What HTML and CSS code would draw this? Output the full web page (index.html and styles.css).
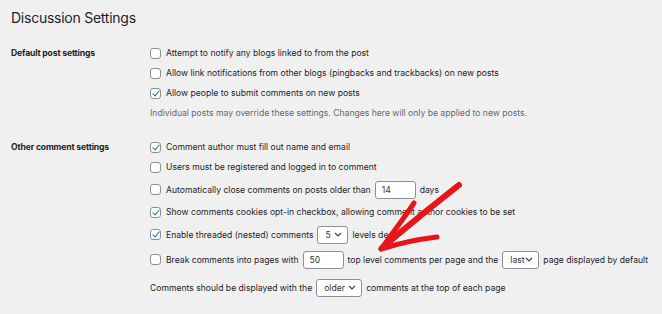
FILE: index.html
```html
<!DOCTYPE html>
<html lang="en">
<head>
  <meta charset="UTF-8" />
  <title>Discussion Settings</title>
  <link rel="stylesheet" href="styles.css">
</head>
<body>
  <div class="wrap">
    <h1 class="title">Discussion Settings</h1>

    <div class="section first">
      <div class="section-label">Default post settings</div>
      <div class="fields">
        <label class="row"><input type="checkbox" class="check"> Attempt to notify any blogs linked to from the post</label>
        <label class="row"><input type="checkbox" class="check"> Allow link notifications from other blogs (pingbacks and trackbacks) on new posts</label>
        <label class="row"><input type="checkbox" class="check" checked> Allow people to submit comments on new posts</label>
        <p class="row description">Individual posts may override these settings. Changes here will only be applied to new posts.</p>
      </div>
    </div>

    <div class="section">
      <div class="section-label">Other comment settings</div>
      <div class="fields">
        <label class="row"><input type="checkbox" class="check" checked> Comment author must fill out name and email</label>
        <label class="row"><input type="checkbox" class="check"> Users must be registered and logged in to comment</label>
        <label class="row field-row"><input type="checkbox" class="check"> Automatically close comments on posts older than <input type="text" class="small-text" value="14"> days</label>
        <label class="row"><input type="checkbox" class="check" checked> Show comments cookies opt-in checkbox, allowing comment author cookies to be set</label>
        <label class="row field-row"><input type="checkbox" class="check" checked> Enable threaded (nested) comments <span class="select select-depth">5 <svg width="8" height="5" viewBox="0 0 8 5"><path d="M1 1L4 4L7 1" stroke="#3c434a" stroke-width="1.2" fill="none"/></svg></span> levels deep</label>
        <label class="row field-row"><input type="checkbox" class="check"> Break comments into pages with <input type="text" class="small-text" value="50"> top level comments per page and the <span class="select select-page">last <svg width="8" height="5" viewBox="0 0 8 5"><path d="M1 1L4 4L7 1" stroke="#3c434a" stroke-width="1.2" fill="none"/></svg></span> page displayed by default</label>
        <div class="row field-row order-row">Comments should be displayed with the <span class="select select-order">older <svg width="8" height="5" viewBox="0 0 8 5"><path d="M1 1L4 4L7 1" stroke="#3c434a" stroke-width="1.2" fill="none"/></svg></span> comments at the top of each page</div>
      </div>
    </div>
  </div>

  <!-- red hand-drawn arrow over the page -->
  <svg class="annotation" width="662" height="314" viewBox="0 0 662 314">
    <g stroke="#e8141c" fill="none" stroke-linecap="round" stroke-linejoin="round">
      <path d="M459 185C440 200 412 222 382 248" stroke-width="6"/>
      <path d="M414 203C404 218 392 234 381 249" stroke-width="5"/>
      <path d="M437 237C420 239 400 243 381 249" stroke-width="5"/>
    </g>
  </svg>
</body>
</html>
```

FILE: styles.css
```css
* {
    margin: 0;
    padding: 0;
    box-sizing: border-box;
}

body {
    background-color: #f0f0f1;
    color: #1d2327;
    font-family: Inter, "Liberation Sans", sans-serif;
    font-size: 8.6px;
    width: 662px;
    height: 314px;
    overflow: hidden;
    position: relative;
}

.wrap {
    padding: 0 10px 0 11px;
}

.title {
    font-size: 14px;
    font-weight: 400;
    height: 36px;
    line-height: 36px;
    letter-spacing: -0.25px;
}

.section {
    display: grid;
    grid-template-columns: 139px 1fr;
    margin-top: 14px;
}

.section.first {
    margin-top: 7px;
}

.section-label {
    font-weight: 700;
    height: 20px;
    line-height: 20px;
    letter-spacing: -0.15px;
}

.fields {
    display: flex;
    flex-direction: column;
}

.row {
    display: flex;
    align-items: center;
    height: 20px;
    white-space: nowrap;
    gap: 4px;
}

.field-row {
    height: 25px;
}

.order-row {
    margin-top: 3px;
}

.description {
    color: #646970;
}

.check {
    appearance: none;
    -webkit-appearance: none;
    width: 11px;
    height: 11px;
    margin-right: 1px;
    border: 1px solid #8c8f94;
    border-radius: 3px;
    background-color: white;
    position: relative;
    flex-shrink: 0;
}

.check:checked::before {
    content: "";
    position: absolute;
    left: 3px;
    top: 0px;
    width: 3px;
    height: 6px;
    border-right: 1.5px solid #2271b1;
    border-bottom: 1.5px solid #2271b1;
    transform: rotate(40deg);
}

.small-text {
    width: 41px;
    height: 18px;
    padding: 0 6px;
    border: 1px solid #8c8f94;
    border-radius: 3px;
    background-color: white;
    color: #2c3338;
    font-family: inherit;
    font-size: 8.6px;
    outline: none;
}

.select {
    display: inline-flex;
    align-items: center;
    justify-content: space-between;
    height: 18px;
    padding: 0 5px 0 7px;
    border: 1px solid #8c8f94;
    border-radius: 3px;
    background-color: white;
    color: #2c3338;
}

.select-depth {
    width: 31px;
}

.select-page {
    width: 37px;
}

.select-order {
    width: 46px;
}

.annotation {
    position: absolute;
    left: 0;
    top: 0;
    pointer-events: none;
}
```
